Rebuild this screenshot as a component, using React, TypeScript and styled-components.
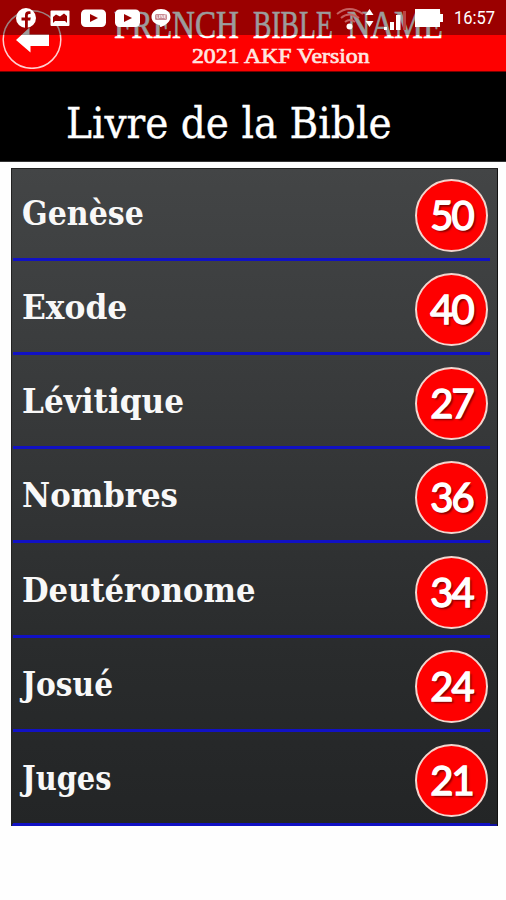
import React, { useLayoutEffect, useRef, useState } from "react";
import styled, { createGlobalStyle } from "styled-components";

const GlobalStyle = createGlobalStyle`
  * { box-sizing: border-box; }
  html, body { margin: 0; padding: 0; background: #fff; }
`;

const serif = '"DejaVu Serif Condensed", "DejaVu Serif", serif';

const Screen = styled.main`
  width: 506px;
  height: 900px;
  overflow: hidden;
  display: flex;
  flex-direction: column;
  background: #fefefe;
`;

const FitBox = styled.span<{ $width: number }>`
  display: block;
  width: ${(p) => p.$width}px;
  white-space: nowrap;
`;

const FitInner = styled.span`
  display: inline-block;
  transform-origin: 0 50%;
`;

/* Text scaled horizontally so that it fills the given width. */
function FitText({ width, children }: { width: number; children: string }) {
  const ref = useRef<HTMLSpanElement>(null);
  const [scale, setScale] = useState(1);
  useLayoutEffect(() => {
    if (ref.current) setScale(width / ref.current.offsetWidth);
  }, [width, children]);
  return (
    <FitBox $width={width}>
      <FitInner ref={ref} style={{ transform: `scaleX(${scale})` }}>
        {children}
      </FitInner>
    </FitBox>
  );
}

const Header = styled.header`
  position: relative;
  flex: none;
  height: 72px;
  background: #fe0000;
  color: #fff;
  border-bottom: 1px solid #700;
`;

const AppName = styled.div`
  display: flex;
  gap: 14px;
  padding: 4px 0 0 114px;
  height: 45px;
  font: 39px/41px "Liberation Serif", serif;
  -webkit-text-stroke: 0.6px #fff;
`;

const Version = styled.div`
  padding-left: 192px;
  color: #ffe6e0;
  font: 22px/22px "Liberation Serif", serif;
  -webkit-text-stroke: 0.7px #ffe6e0;
`;

const BackButton = styled.button`
  position: absolute;
  left: 2px;
  top: 9px;
  width: 60px;
  height: 60px;
  padding: 0;
  border: 0;
  background: none;
  svg { display: block; }
`;

const StatusBar = styled.div`
  position: absolute;
  inset: 0 0 auto 0;
  height: 35px;
  background: rgba(0, 0, 0, 0.39);
  svg { display: block; }
`;

const Clock = styled.span`
  position: absolute;
  left: 454px;
  top: 7px;
  font: 18.5px/22px Roboto, sans-serif;
`;

const TitleBar = styled.div`
  flex: none;
  height: 90px;
  padding: 24px 0 0 66px;
  background: #000;
  border-bottom: 1px solid #333;
`;

const Title = styled.h1`
  margin: 0;
  color: #fff;
  font: 400 42px/56px ${serif};
  font-stretch: condensed;
  -webkit-text-stroke: 0.3px #fff;
`;

const List = styled.ul`
  flex: none;
  list-style: none;
  width: 487px;
  margin: 6px 0 0 11px;
  padding: 0 8px 0 2px;
  background: linear-gradient(#434546, #383a3b 35%, #292b2c 75%, #232526);
  box-shadow: inset 1px 1px 0 #222, inset -1px 0 0 #111, inset 0 -2px 0 #1111a0;
`;

const Row = styled.li`
  display: flex;
  align-items: flex-end;
  justify-content: space-between;
  height: 94.25px;
  padding: 0 2px 6px 9px;
  border-bottom: 3px solid #1111c4;
  &:first-child { height: 92.6px; }
`;

const BookName = styled.span`
  padding-bottom: 18px;
  color: #f8f8f8;
  font: 700 33px/40px ${serif};
  font-stretch: condensed;
`;

const Count = styled.span`
  width: 73px;
  height: 73px;
  border: 2px solid #f3d5ce;
  border-radius: 50%;
  background: #fe0000;
  color: #fff;
  text-align: center;
  font: 400 40px/69px Lato, sans-serif;
  -webkit-text-stroke: 1.4px #fff;
  letter-spacing: -2px;
  text-shadow: 2px 2px 2px rgba(70, 0, 0, 0.7);
`;

const books: [string, number, number][] = [
  ["Genèse", 50, 121.5],
  ["Exode", 40, 105.5],
  ["Lévitique", 27, 162.5],
  ["Nombres", 36, 155.5],
  ["Deutéronome", 34, 233.5],
  ["Josué", 24, 91],
  ["Juges", 21, 89.5],
];

function BackIcon() {
  return (
    <svg width="60" height="60" viewBox="2 9 60 60" fill="none">
      <circle cx="32" cy="39.5" r="28.8" stroke="#ffd0d0" strokeWidth="1.5" />
      <path d="M16 40 29.5 27.5V34.5H49V46H30.5V52.5Z" fill="#fff" />
    </svg>
  );
}

function StatusIcons() {
  return (
    <svg width="506" height="35" viewBox="0 0 506 35">
      <circle cx="26" cy="18" r="10" fill="#fff" />
      <path d="M25 28V20.5h-3.5v-3H25v-2.3c0-3 1.8-4.4 5.5-3.7v2.6c-2-.2-2.7.2-2.7 1.6v1.8h3l-.6 3h-2.4V28Z" fill="#9b0000" />
      <rect x="50.500" y="10.500" width="19" height="15.500" rx="1" fill="#fff" />
      <path d="M53 23v-6l3-2.500 4 2 4-3 3 2.500v7l-2-2H55Z" fill="#9b0000" />
      {[81, 115].map((x) => (
        <g key={x}>
          <rect x={x} y="9.500" width="25" height="17.500" rx="4.500" fill="#fff" />
          <path d={`M${x + 9} 14v8l8-4Z`} fill="#9b0000" />
        </g>
      ))}
      <path d="M161 9c5.500 0 9.500 3.500 9.500 8 0 4.500-4 7.500-9.500 10-1 .5-1-1-1-2-5-.5-8.500-4-8.500-8 0-4.500 4-8 9.500-8Z" fill="#fff" />
      <rect x="155" y="14" width="12" height="6" rx="1.500" fill="#c98a93" />
      <path d="M157 15v3h1.500m1-3v3m1.500 0v-3l2 3v-3m3 0h-1.500v3h1.500m-1.500-1.500h1" fill="none" stroke="#fff" strokeWidth=".7" />
      <g fill="none" stroke="#c66060" strokeWidth="2">
        <path d="M337 14q12-10 26 0" />
        <path d="M341 18q8-7 18 0" />
        <path d="M345 22q5-4 10 0" />
      </g>
      <circle cx="349.500" cy="26.500" r="3" fill="#fff" />
      <path d="m369.500 9 4 6h-8Zm0 18 4-6h-8Z" fill="#fff" />
      <path d="M384 27h3v3h-3Zm6-5h4v8h-4Zm6-7h4.500v15H396Z" fill="#fff" />
      <path d="M403 11h3v19h-3Z" fill="#ba4444" />
      <path d="M415 9h25v5h3v8h-3v5h-25Z" fill="#fff" />
    </svg>
  );
}

export default function App() {
  return (
    <Screen>
      <GlobalStyle />
      <Header>
        <AppName>
          <FitText width={125}>FRENCH</FitText>
          <FitText width={80}>BIBLE</FitText>
          <FitText width={96}>NAME</FitText>
        </AppName>
        <Version>
          <FitText width={178}>2021 AKF Version</FitText>
        </Version>
        <BackButton aria-label="Retour">
          <BackIcon />
        </BackButton>
        <StatusBar>
          <StatusIcons />
          <Clock>
            <FitText width={41}>16:57</FitText>
          </Clock>
        </StatusBar>
      </Header>
      <TitleBar>
        <Title>
          <FitText width={326}>Livre de la Bible</FitText>
        </Title>
      </TitleBar>
      <List>
        {books.map(([name, chapters, width]) => (
          <Row key={name}>
            <BookName>
              <FitText width={width}>{name}</FitText>
            </BookName>
            <Count>{chapters}</Count>
          </Row>
        ))}
      </List>
    </Screen>
  );
}
